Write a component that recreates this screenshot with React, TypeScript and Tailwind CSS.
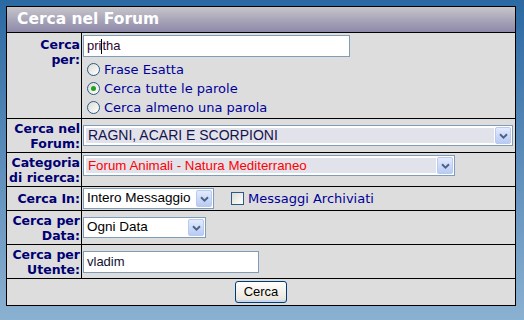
import type { ReactNode } from "react";

const verdana = "font-['DejaVu_Sans',Verdana,sans-serif]";
const arial = "font-['Liberation_Sans',Arial,sans-serif]";

function Arrow() {
  return (
    <div className="w-[16px] h-full rounded-[2px] border border-[#b9c9ef] bg-linear-to-b from-[#e3ebfd] to-[#b7cbf4] flex items-center justify-center">
      <svg width="9" height="6" viewBox="0 0 9 6">
        <path d="M1 1.2 L4.5 4.6 L8 1.2" fill="none" stroke="#4d6185" strokeWidth="1.9" />
      </svg>
    </div>
  );
}

function FakeSelect({
  box,
  text,
  textClass,
  gray,
}: {
  box: string;
  text: string;
  textClass: string;
  gray?: boolean;
}) {
  return (
    <div className={`flex h-[21px] ${box} border border-[#7f9db9] bg-white p-[1px]`}>
      <div
        className={`flex-1 flex items-center pl-[2px] mr-[1px] whitespace-nowrap ${arial} ${textClass} ${
          gray ? "m-[1px] bg-[#e2e2ea]" : ""
        }`}
      >
        {text}
      </div>
      <Arrow />
    </div>
  );
}

function Radio({ checked, label }: { checked?: boolean; label: string }) {
  return (
    <div className="flex items-center h-[19px] pl-[4px] gap-[4px]">
      <span className="w-[13px] h-[13px] rounded-full border border-[#2c5a86] bg-linear-to-br from-[#dcdcd6] to-white flex items-center justify-center">
        {checked && <span className="w-[5px] h-[5px] rounded-full bg-[#21a121]" />}
      </span>
      <span className={`text-[13px] text-[#000099] ${verdana}`}>{label}</span>
    </div>
  );
}

function Row({
  label,
  children,
  h,
  last,
  contentClass,
  labelClass,
}: {
  label: ReactNode;
  children: ReactNode;
  h: string;
  last?: boolean;
  contentClass?: string;
  labelClass?: string;
}) {
  return (
    <div className={`flex ${h} ${last ? "" : "border-b border-black"}`}>
      <div
        className={`w-[75px] shrink-0 border-r border-black pr-[1px] text-right font-bold text-[12.5px] leading-[15px] text-[#000072] whitespace-nowrap ${verdana} ${
          labelClass ?? "flex flex-col justify-center"
        }`}
      >
        {label}
      </div>
      <div className={`flex-1 pl-[1px] ${contentClass ?? "flex items-center"}`}>{children}</div>
    </div>
  );
}

export default function App() {
  return (
    <div className="w-[524px] h-[320px] pt-[6px] pl-[6px] bg-linear-to-b from-[#2a69a2] to-[#8bb1d1]">
      <div className="w-[510px] border border-black bg-[#dddddd]">
        <div
          className={`h-[26px] border-b border-black bg-linear-to-b from-[#c6c5ca] to-[#8e88a8] flex items-center pl-[10px] text-white font-bold text-[15.5px] ${verdana}`}
        >
          Cerca nel Forum
        </div>

        <Row
          h="h-[86px]"
          labelClass="pt-[4px]"
          contentClass="flex flex-col pt-[2px]"
          label={
            <>
              <div>Cerca</div>
              <div>per:</div>
            </>
          }
        >
          <div className={`w-[267px] h-[22px] border border-[#7f9db9] bg-white flex items-center pl-[3px] text-[13px] text-[#300830] ${arial}`}>
            pri
            <span className="w-[1px] h-[15px] bg-black" />
            tha
          </div>
          <div className="pt-[3px]">
            <Radio label="Frase Esatta" />
            <Radio checked label="Cerca tutte le parole" />
            <Radio label="Cerca almeno una parola" />
          </div>
        </Row>

        <Row
          h="h-[34px]"
          label={
            <>
              <div>Cerca nel</div>
              <div>Forum:</div>
            </>
          }
        >
          <FakeSelect box="w-[430px]" text="RAGNI, ACARI E SCORPIONI" textClass="text-[14px] text-[#14144a]" gray />
        </Row>

        <Row
          h="h-[34px]"
          contentClass="flex items-start pt-[2px]"
          label={
            <>
              <div>Categoria</div>
              <div>di ricerca:</div>
            </>
          }
        >
          <FakeSelect
            box="w-[372px]"
            text="Forum Animali - Natura Mediterraneo"
            textClass="text-[13.3px] text-[#ff0000]"
            gray
          />
        </Row>

        <Row h="h-[24px]" label={<div>Cerca In:</div>}>
          <FakeSelect box="w-[131px]" text="Intero Messaggio" textClass="text-[13.5px] text-black" />
          <span className="ml-[17px] w-[13px] h-[13px] border border-[#2c5a86] bg-linear-to-br from-[#dcdcd6] to-white" />
          <span className={`ml-[4px] text-[13px] text-[#000099] ${verdana}`}>Messaggi Archiviati</span>
        </Row>

        <Row
          h="h-[34px]"
          label={
            <>
              <div>Cerca per</div>
              <div>Data:</div>
            </>
          }
        >
          <FakeSelect box="w-[123px]" text="Ogni Data" textClass="text-[13.5px] text-black" />
        </Row>

        <Row
          h="h-[34px]"
          label={
            <>
              <div>Cerca per</div>
              <div>Utente:</div>
            </>
          }
        >
          <div className={`w-[176px] h-[22px] border border-[#7f9db9] bg-white flex items-center pl-[3px] text-[13px] text-[#101030] ${arial}`}>
            vladim
          </div>
        </Row>

        <div className="h-[26px] flex items-center justify-center">
          <button
            className={`w-[52px] h-[22px] rounded-[3px] border border-[#003c74] bg-linear-to-b from-white to-[#e6e3d6] shadow-[inset_0_-2px_0_#c9d8f2,inset_0_1px_0_#ffffff] text-[13px] text-black ${arial}`}
          >
            Cerca
          </button>
        </div>
      </div>
    </div>
  );
}
